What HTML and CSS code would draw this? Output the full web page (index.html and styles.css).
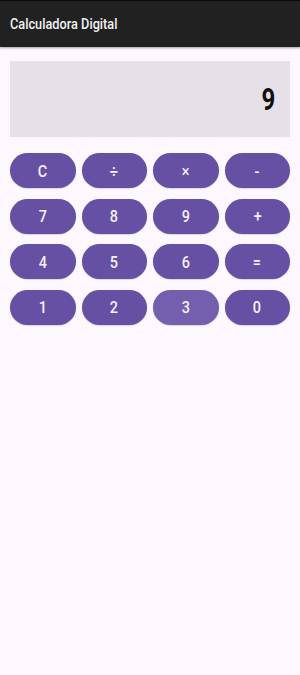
FILE: index.html
```html
<!DOCTYPE html>
<html lang="pt">
<head>
<meta charset="utf-8">
<title>Calculadora Digital</title>
<link rel="stylesheet" href="styles.css">
</head>
<body>
<header class="appbar"><span class="title">Calculadora Digital</span></header>
<main class="content">
  <div class="display"><span class="value">9</span></div>
  <div class="keys">
    <button class="key"><span class="label">C</span></button>
    <button class="key"><span class="label">÷</span></button>
    <button class="key"><span class="label">×</span></button>
    <button class="key"><span class="label">-</span></button>
    <button class="key"><span class="label">7</span></button>
    <button class="key"><span class="label">8</span></button>
    <button class="key"><span class="label">9</span></button>
    <button class="key"><span class="label">+</span></button>
    <button class="key"><span class="label">4</span></button>
    <button class="key"><span class="label">5</span></button>
    <button class="key"><span class="label">6</span></button>
    <button class="key"><span class="label">=</span></button>
    <button class="key"><span class="label">1</span></button>
    <button class="key"><span class="label">2</span></button>
    <button class="key key-pressed"><span class="label">3</span></button>
    <button class="key"><span class="label">0</span></button>
  </div>
</main>
</body>
</html>
```

FILE: styles.css
```css
html, body {
  margin: 0;
  padding: 0;
}
body {
  background: #fdf7fe;
  font-family: Roboto, "Liberation Sans", sans-serif;
  width: 300px;
  height: 675px;
  overflow: hidden;
}
.appbar {
  height: 46px;
  background: #212121;
  border-top: 1px solid #0a0a0a;
  box-shadow: 0 1px 2px rgba(0,0,0,0.35);
  display: flex;
  align-items: center;
  padding-left: 10px;
}
.title {
  color: #f2f2f2;
  font-size: 15px;
  font-weight: 500;
  display: inline-block;
  transform: scaleX(0.85);
  transform-origin: left center;
  white-space: nowrap;
}
.content {
  padding: 14px 10px 0 10px;
}
.display {
  height: 76px;
  background: #e6e0e9;
  display: flex;
  align-items: center;
  justify-content: flex-end;
  padding-right: 15px;
}
.value {
  font-size: 32px;
  font-weight: 700;
  color: #111;
  display: inline-block;
  transform: scaleX(0.75);
  transform-origin: right center;
}
.keys {
  margin-top: 16px;
  display: grid;
  grid-template-columns: repeat(4, 1fr);
  grid-auto-rows: 35px;
  column-gap: 6px;
  row-gap: 10.5px;
}
.key {
  border: none;
  border-radius: 18px;
  background: #6650a4;
  color: #f4f0fa;
  font-family: Roboto, "Liberation Sans", sans-serif;
  font-size: 17px;
  font-weight: 500;
  padding: 0;
  box-shadow: 0 0.5px 1px rgba(0,0,0,0.25);
}
.label {
  display: inline-block;
  transform: scaleX(0.85);
}
.key-pressed {
  background: #735fae;
}
```
